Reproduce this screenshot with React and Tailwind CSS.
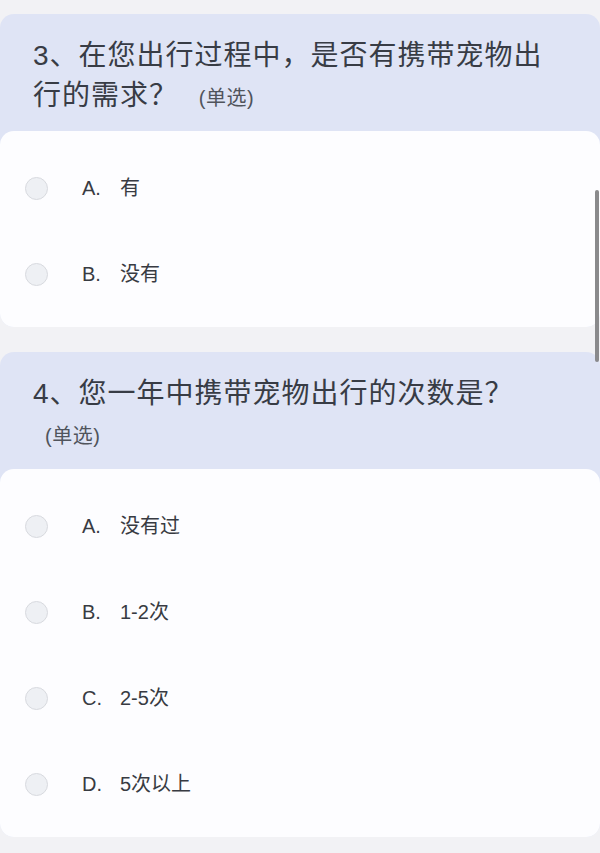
import React from 'react'

const questions = [
  {
    title: '3、在您出行过程中，是否有携带宠物出行的需求？',
    options: [
      { key: 'A.', text: '有' },
      { key: 'B.', text: '没有' },
    ],
  },
  {
    title: '4、您一年中携带宠物出行的次数是？',
    options: [
      { key: 'A.', text: '没有过' },
      { key: 'B.', text: '1-2次' },
      { key: 'C.', text: '2-5次' },
      { key: 'D.', text: '5次以上' },
    ],
  },
]

const Option = ({ item }) => (
  <div className="h-[86px] flex items-center pl-[25px]">
    <span className="w-[23px] h-[23px] rounded-full bg-[#eef0f4] border border-[#d8dadf] shrink-0" />
    <span className="ml-[34px] flex items-center text-[20px] text-[#383b42]">
      <span className="w-[38px] inline-block">{item.key}</span>
      <span>{item.text}</span>
    </span>
  </div>
)

const QuestionCard = ({ q }) => (
  <div className="bg-[#dfe4f5] rounded-[14px]">
    <div className="pt-[22px] pb-[15px] px-[33px] text-[28px] leading-[40px] tracking-[1px] text-[#383c45]">
      {q.title}{' '}
      <span className="ml-3 whitespace-nowrap leading-none text-[20px] tracking-[0.5px] text-[#50545c]">(单选)</span>
    </div>
    <div className="bg-[#fdfdff] rounded-[14px] pt-[14px] pb-[10px]">
      {q.options.map(o => (
        <Option key={o.key} item={o} />
      ))}
    </div>
  </div>
)

const App = () => {
  return (
    <div
      className="relative min-h-screen bg-[#f2f2f5] pt-[14px] pb-[20px] flex flex-col gap-[25px]"
      style={{ fontFamily: '"Liberation Sans", "Noto Sans CJK SC", sans-serif' }}
    >
      {questions.map((q, i) => (
        <QuestionCard key={i} q={q} />
      ))}
      {/* overlay scroll indicator */}
      <div className="absolute right-[1px] top-[190px] w-[4px] h-[172px] rounded-full bg-[#8a8a8c]" />
    </div>
  )
}

export default App
